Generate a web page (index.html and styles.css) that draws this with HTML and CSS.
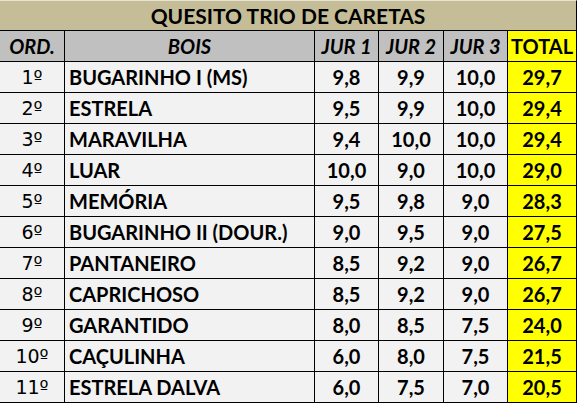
FILE: index.html
```html
<!DOCTYPE html>
<html lang="pt">
<head>
<meta charset="utf-8">
<title>Quesito Trio de Caretas</title>
<link rel="stylesheet" href="styles.css">
</head>
<body>
<div class="sheet">
  <div class="title">QUESITO TRIO DE CARETAS</div>

  <div class="hd">ORD.</div>
  <div class="hd">BOIS</div>
  <div class="hd">JUR 1</div>
  <div class="hd">JUR 2</div>
  <div class="hd">JUR 3</div>
  <div class="hd total">TOTAL</div>

  <div class="ord">1º</div><div class="name">BUGARINHO I (MS)</div><div class="num">9,8</div><div class="num">9,9</div><div class="num">10,0</div><div class="num total">29,7</div>
  <div class="ord">2º</div><div class="name">ESTRELA</div><div class="num">9,5</div><div class="num">9,9</div><div class="num">10,0</div><div class="num total">29,4</div>
  <div class="ord">3º</div><div class="name">MARAVILHA</div><div class="num">9,4</div><div class="num">10,0</div><div class="num">10,0</div><div class="num total">29,4</div>
  <div class="ord">4º</div><div class="name">LUAR</div><div class="num">10,0</div><div class="num">9,0</div><div class="num">10,0</div><div class="num total">29,0</div>
  <div class="ord">5º</div><div class="name">MEMÓRIA</div><div class="num">9,5</div><div class="num">9,8</div><div class="num">9,0</div><div class="num total">28,3</div>
  <div class="ord">6º</div><div class="name">BUGARINHO II (DOUR.)</div><div class="num">9,0</div><div class="num">9,5</div><div class="num">9,0</div><div class="num total">27,5</div>
  <div class="ord">7º</div><div class="name">PANTANEIRO</div><div class="num">8,5</div><div class="num">9,2</div><div class="num">9,0</div><div class="num total">26,7</div>
  <div class="ord">8º</div><div class="name">CAPRICHOSO</div><div class="num">8,5</div><div class="num">9,2</div><div class="num">9,0</div><div class="num total">26,7</div>
  <div class="ord">9º</div><div class="name">GARANTIDO</div><div class="num">8,0</div><div class="num">8,5</div><div class="num">7,5</div><div class="num total">24,0</div>
  <div class="ord">10º</div><div class="name">CAÇULINHA</div><div class="num">6,0</div><div class="num">8,0</div><div class="num">7,5</div><div class="num total">21,5</div>
  <div class="ord">11º</div><div class="name">ESTRELA DALVA</div><div class="num">6,0</div><div class="num">7,5</div><div class="num">7,0</div><div class="num total">20,5</div>
</div>
</body>
</html>
```

FILE: styles.css
```css
html, body {
  margin: 0;
  padding: 0;
  background: #ffffff;
}

.sheet {
  display: grid;
  grid-template-columns: 64px 249px 63px 64px 63px 68px;
  grid-template-rows: 29px repeat(12, 30px);
  gap: 1px;
  width: 576px;
  background: #000000;
  border-top: 1px solid #e6e2d4;
  border-right: 1px solid #000000;
  border-bottom: 1px solid #000000;
  font-family: Lato, "Open Sans", "Liberation Sans", sans-serif;
  font-weight: 700;
  font-size: 20px;
  color: #000000;
}

.sheet > div {
  display: flex;
  align-items: center;
  justify-content: center;
  background: #f2f2f2;
  white-space: nowrap;
  overflow: hidden;
}

.sheet > .title {
  grid-column: 1 / -1;
  background: #c4bd97;
  font-size: 21px;
}

.sheet > .hd {
  background: #c0c0c0;
  font-style: italic;
}

.sheet > .total {
  background: #ffff00;
  font-style: normal;
}

.sheet > .name {
  justify-content: flex-start;
  padding-left: 4px;
}

.sheet > .ord {
  font-family: "DejaVu Sans", "Liberation Sans", sans-serif;
  font-weight: 400;
  font-size: 19px;
}
```
